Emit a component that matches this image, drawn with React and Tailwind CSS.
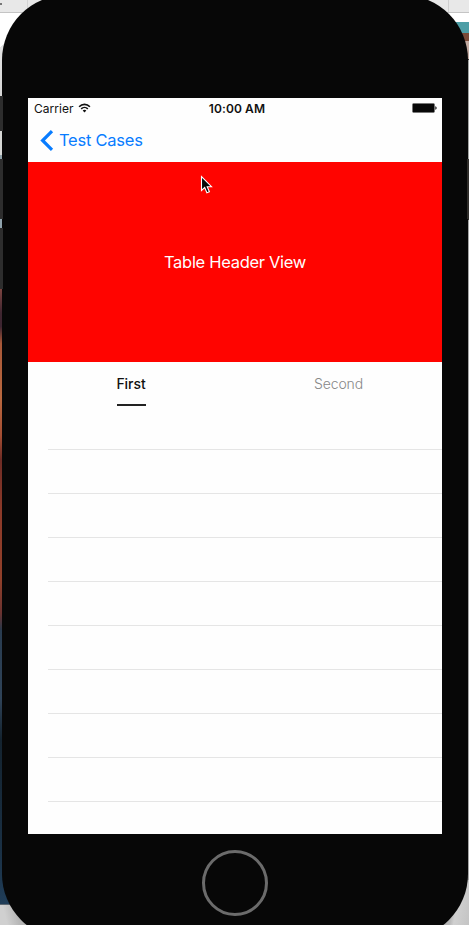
import React from 'react';

function LeftEdge() {
  return (
    <div className="flex w-[90px] flex-col">
      <div className="flex h-[12px] bg-[#e8e8e8]">
        <div className="mt-[3px] h-[2px] w-[2px] bg-[#777]" />
        <div className="ml-[25px] w-px bg-[#d4d4d4]" />
      </div>
      <div className="h-px bg-[#c4c4c4]" />
      <div className="h-[83px] bg-[linear-gradient(135deg,#fff_0%,#fff_20%,#e2e2e2_20%,#cfcfcf_60%)]" />
      <div className="h-[35px] bg-[#2d2d2d]" />
      <div className="h-[24px] bg-[#d5d6d4]" />
      <div className="h-[4px] bg-[#8fa0a8]" />
      <div className="h-[60px] bg-[#2d2d2d]" />
      <div className="h-[9px] bg-[#8fa2ac]" />
      <div className="h-[61px] bg-[#2d2d2d]" />
      <div className="h-[341px] bg-[linear-gradient(#7c4440_0%,#3f2630_7%,#3d2531_11%,#a85838_16%,#b9683f_32%,#a44e33_43%,#6e2c25_50%,#8c3a29_65%,#91402a_85%,#6b3330_95%,#29384a_100%)]" />
      <div className="h-[274px] bg-[linear-gradient(#293c50,#2f4358_25%,#14232f_40%,#1a3044_80%,#203d58)]" />
      <div className="h-px bg-[#5b6670]" />
      <div className="flex-1 bg-[linear-gradient(75deg,#d0d0d0_8%,#b5b5b5_22%,#a8a8a8)]" />
    </div>
  );
}

function RightEdge() {
  return (
    <div className="flex w-[70px] flex-col">
      <div className="flex h-[12px] bg-[#e8e8e8]">
        <div className="ml-[49px] w-px bg-[#cfcfcf]" />
      </div>
      <div className="h-px bg-[#c4c4c4]" />
      <div className="h-[9px] bg-white" />
      <div className="h-[11px] bg-[#4d9ea6]" />
      <div className="h-[8px] bg-[#7a4a38]" />
      <div className="h-[18px] bg-[#c3aaa1]" />
      <div className="h-px bg-[#333]" />
      <div className="h-[99px] bg-[#a3a5a3]" />
      <div className="h-[61px] bg-[#302e2b]" />
      <div className="h-[660px] bg-[#a5a5a5]" />
      <div className="flex-1 bg-[linear-gradient(100deg,#a8a8a8_55%,#b8b8b8_75%,#d0d0d0_80%,#c4c4c4)]" />
    </div>
  );
}

function StatusBar() {
  return (
    <div className="grid h-5 grid-cols-3 items-center pr-[5px] pl-[6px] leading-5 text-[#111]">
      <div className="flex h-5 items-start gap-[5px]">
        <span className="w-[39px] pt-px text-[12px] leading-[20px] tracking-[0.05px] whitespace-nowrap">Carrier</span>
        <svg width="13" height="10" viewBox="0 0 12 10" fill="none" stroke="#111" strokeWidth="1.6" className="mt-[5px]">
          <path d="M.6 3.8C3.7.5 8.3.5 11.4 3.8" />
          <path d="M2.7 5.9c1.9-1.9 4.7-1.9 6.6 0" />
          <path d="M6 9.5 4.2 7.6c1-1 2.6-1 3.6 0Z" fill="#111" stroke="none" />
        </svg>
      </div>
      <div className="h-5 pt-px pl-[3px] text-center text-[12px] leading-[20px] font-semibold tracking-[0.1px] whitespace-nowrap">10:00 AM</div>
      <svg width="25" height="10" viewBox="0 0 25 10" className="justify-self-end">
        <rect x=".5" y=".5" width="22" height="9" rx="1.2" fill="#080808" stroke="#777" />
        <rect x="1" y="1" width="20.5" height="8" fill="#080808" />
        <path d="M23.3 3.2c1.8.4 1.8 3.2 0 3.6Z" fill="#111" />
      </svg>
    </div>
  );
}

export default function App() {
  return (
    <div className="relative flex h-[925px] w-[469px] overflow-hidden bg-[#b5b5b5] font-['Inter','Liberation_Sans',sans-serif]">
      <div className="absolute inset-0 flex justify-between">
        <LeftEdge />
        <RightEdge />
      </div>

      <div className="relative -mt-[5px] ml-[2px] flex h-[944px] w-[466px] shrink-0 flex-col items-center rounded-[65px] bg-[#070707] pt-[103px]">
        <main className="flex h-[736px] w-[414px] shrink-0 flex-col overflow-hidden bg-[#fefefe]">
          <StatusBar />
          <nav className="flex h-11 shrink-0 items-center pl-[12px] text-[#087cff]">
            <svg width="14" height="21" viewBox="0 0 14 21" fill="none" stroke="currentColor" strokeWidth="3.2">
              <path d="M12 1.2 2.6 10.5 12 19.8" />
            </svg>
            <span className="ml-[5px] pt-px text-[16.5px] tracking-[-0.24px]">Test Cases</span>
          </nav>
          <header className="flex h-[200px] shrink-0 items-center justify-center bg-[#ff0400] pt-px text-[16.5px] tracking-[-0.3px] text-white">
            Table Header View
          </header>
          <div className="grid h-11 shrink-0 grid-cols-2 text-[14px]">
            <div className="flex flex-col items-center">
              <span className="h-[42px] pr-px leading-[44px] font-medium tracking-[-0.05px] text-[#111]">First</span>
              <div className="h-[2px] w-[29px] bg-[#222]" />
            </div>
            <span className="text-center leading-[44px] font-light tracking-[-0.1px] text-[#888]">Second</span>
          </div>
          <div className="flex flex-col pl-5">
            {Array.from({ length: 9 }, (_, i) => (
              <div key={i} className="h-11 shrink-0 border-b border-[#e5e5e5]" />
            ))}
          </div>
        </main>
        <div className="mt-4 size-[66px] shrink-0 rounded-full border-[3px] border-[#6b6b6b]" />
      </div>

      {/* Volume, mute and power buttons along the phone's sides */}
      <div className="absolute inset-0 flex justify-between">
        <div className="flex w-[3px] flex-col">
          <div className="mt-[96px] h-[35px] bg-[#2d2d2d]" />
          <div className="mt-[28px] h-[60px] bg-[#2d2d2d]" />
          <div className="mt-[9px] h-[61px] bg-[#2d2d2d]" />
        </div>
        <div className="flex w-[2px] flex-col">
          <div className="mt-[159px] h-[60px] bg-[#302e2b]" />
        </div>
      </div>

      <svg className="absolute top-[175px] left-[200px]" width="13" height="20" viewBox="0 0 13 20">
        <path d="M1.5 1.5v14l3.2-3 2.2 5.2 2.5-1-2.2-5h4.3Z" fill="#080808" stroke="#fff" strokeWidth="1.1" />
      </svg>
    </div>
  );
}
